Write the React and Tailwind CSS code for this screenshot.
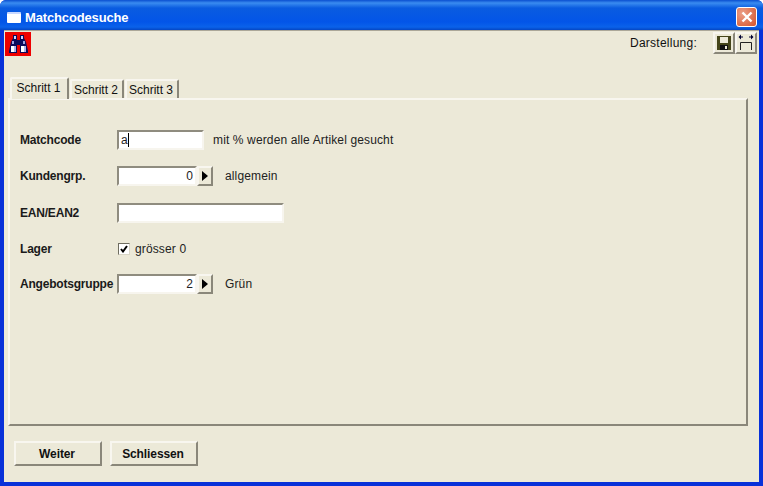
const sunken = 'border-2 border-t-[#8f8c7f] border-l-[#8f8c7f] border-r-[#f7f5ee] border-b-[#f7f5ee] bg-white'
const raised = 'border-2 border-t-[#f8f6ef] border-l-[#f8f6ef] border-r-[#8a877a] border-b-[#8a877a] bg-[#ece9d8]'
const text = 'text-[12px] tracking-[0.13px] text-[#222]'

function Binoculars() {
    return (
        <div className="flex h-[24px] w-[26px] items-center justify-center bg-[#ee0000]">
            <svg width="19" height="18" viewBox="0 0 19 18">
                <path d="M4 0h4v5h3V0h4v3l2 4 2 9v2h-8v-8H8v8H0v-2l2-9 2-4z" fill="#0b0b5a" />
                <rect x="5" y="1" width="2" height="3" fill="#cfd3ff" />
                <rect x="12" y="1" width="2" height="3" fill="#cfd3ff" />
                <rect x="3" y="6" width="2" height="3" fill="#9aa0e0" />
                <rect x="14" y="6" width="2" height="3" fill="#9aa0e0" />
                <rect x="2" y="11" width="3" height="6" fill="#ffffff" />
                <rect x="5" y="11" width="2" height="6" fill="#aeb4ea" />
                <rect x="12" y="11" width="3" height="6" fill="#ffffff" />
                <rect x="15" y="11" width="2" height="6" fill="#aeb4ea" />
            </svg>
        </div>
    )
}

function Tab({ label, active }) {
    const box = active
        ? 'h-[22px] w-[59px] bg-[#ece9d8] z-10 mb-[-1px] pr-[2px] pb-[3px]'
        : 'h-[19px] w-[54px] pr-[2px]'
    return (
        <div className={`flex items-center justify-center rounded-t-[2px] border-t-2 border-l-2 border-r-2 border-t-[#f8f6ef] border-l-[#f8f6ef] border-r-[#8a877a] text-[12px] text-[#111] ${box}`}>
            {label}
        </div>
    )
}

function Spinner({ value }) {
    return (
        <div className="flex h-[20px] w-[96px]">
            <div className={`flex w-[80px] items-center justify-end pr-[2px] ${text} ${sunken}`}>{value}</div>
            <div className={`flex w-[16px] items-center justify-center ${raised}`}>
                <svg width="6" height="10" viewBox="0 0 6 10"><path d="M0 0l6 5-6 5z" fill="#000" /></svg>
            </div>
        </div>
    )
}

function Row({ label, className, children }) {
    return (
        <div className={`flex items-center ${className}`}>
            <div className="w-[97px] shrink-0 text-[12px] font-bold tracking-[-0.2px] whitespace-nowrap text-[#1a1a1a]">{label}</div>
            {children}
        </div>
    )
}

function Btn({ label }) {
    return (
        <div className={`flex h-[25px] w-[88px] items-center justify-center pr-[2px] text-[12px] font-bold tracking-[-0.1px] text-[#111] ${raised}`}>{label}</div>
    )
}

export default function App() {
    return (
        <div className="flex h-[486px] w-[763px] flex-col overflow-hidden rounded-t-[6px] bg-[#0831d9] font-['Liberation_Sans',sans-serif]">
            {/* title bar */}
            <div className="flex h-[30px] shrink-0 items-end justify-between bg-[linear-gradient(to_bottom,#0a4fd0_0px,#3a8cf0_3px,#0a5ce0_8px,#0355e8_22px,#0a62ea_27px,#0446c4_30px)] pr-[6px] pb-[3px] pl-[7px]">
                <div className="flex items-center gap-[4px]">
                    <div className="h-[11px] w-[14px] rounded-[1px] border-t-2 border-[#c8d8ff] bg-white" />
                    <span className="text-[13px] font-bold tracking-[-0.15px] text-white">Matchcodesuche</span>
                </div>
                <div className="flex h-[20px] w-[21px] items-center justify-center rounded-[3px] border border-white bg-[radial-gradient(circle_at_30%_30%,#eb9f88,#d5532a)]">
                    <svg width="12" height="12" viewBox="0 0 12 12"><path d="M1.5 1.5l9 9M10.5 1.5l-9 9" stroke="#fff" strokeWidth="2.4" /></svg>
                </div>
            </div>

            {/* client */}
            <div className="mx-[4px] mb-[4px] flex flex-1 flex-col border-t border-[#aca899] bg-[#ece9d8] pr-[10px] pl-[4px]">
                <div className="-mr-[8px] flex h-[26px] items-start justify-between">
                    <div className="-ml-[3px] mt-[1px]"><Binoculars /></div>
                    <div className="mt-[1px] flex items-center">
                        <span className="mr-[16px] text-[12px] tracking-[0.25px] text-[#111]">Darstellung:</span>
                        <div className={`flex h-[22px] w-[22px] items-center justify-center ${raised}`}>
                            <svg width="16" height="16" viewBox="0 0 16 16">
                                <path d="M1 1h14v14H1z" fill="#45451a" />
                                <path d="M4 2h8v6H4z" fill="#ece9d8" />
                                <path d="M4 10h8v5H4z" fill="#111" />
                                <path d="M9 11h2v3H9z" fill="#ece9d8" />
                            </svg>
                        </div>
                        <div className={`flex h-[22px] w-[22px] items-center justify-center ${raised}`}>
                            <svg width="18" height="18" viewBox="0 0 18 18" fill="none">
                                <path d="M3.5 8.5V16M14.5 8.5V16M3.5 8.5h11" stroke="#222" />
                                <path d="M3 3h3M12 3h3" stroke="#003" />
                                <path d="M4 0.5v5L1.5 3zM14 0.5v5L16.5 3z" fill="#003" />
                            </svg>
                        </div>
                    </div>
                </div>

                {/* tabs */}
                <div className="mt-[20px] flex items-end gap-[1px] pl-[2px]">
                    <Tab label="Schritt 1" active />
                    <Tab label="Schritt 2" />
                    <Tab label="Schritt 3" />
                </div>

                <div className="flex h-[328px] w-[740px] flex-col border-2 border-t-[#f8f6ef] border-r-[#8a877a] border-b-[#8a877a] border-l-[#f8f6ef] pl-[10px]">
                    <Row label="Matchcode" className="mt-[30px] h-[20px]">
                        <div className={`flex h-[20px] w-[87px] items-center pl-[2px] ${text} ${sunken}`}>
                            a<span className="h-[14px] w-px bg-black" />
                        </div>
                        <span className={`ml-[9px] ${text}`}>mit % werden alle Artikel gesucht</span>
                    </Row>
                    <Row label="Kundengrp." className="mt-[16px] h-[20px]">
                        <Spinner value="0" />
                        <span className={`ml-[12px] ${text}`}>allgemein</span>
                    </Row>
                    <Row label="EAN/EAN2" className="mt-[17px] h-[20px]">
                        <div className={`h-[20px] w-[167px] ${sunken}`} />
                    </Row>
                    <Row label="Lager" className="mt-[19px] h-[13px]">
                        <div className="ml-[1px] flex h-[12px] w-[12px] items-center justify-center border border-t-[#6f6d60] border-r-[#d8d5c6] border-b-[#d8d5c6] border-l-[#6f6d60] bg-white">
                            <svg width="8" height="8" viewBox="0 0 8 8" fill="none"><path d="M1 4l2 2.5L7 1" stroke="#000" strokeWidth="2" /></svg>
                        </div>
                        <span className={`ml-[5px] ${text}`}>grösser 0</span>
                    </Row>
                    <Row label="Angebotsgruppe" className="mt-[19px] h-[20px]">
                        <Spinner value="2" />
                        <span className={`ml-[12px] ${text}`}>Grün</span>
                    </Row>
                </div>

                <div className="mt-[15px] flex gap-[8px] pl-[6px]">
                    <Btn label="Weiter" />
                    <Btn label="Schliessen" />
                </div>
            </div>
        </div>
    )
}
